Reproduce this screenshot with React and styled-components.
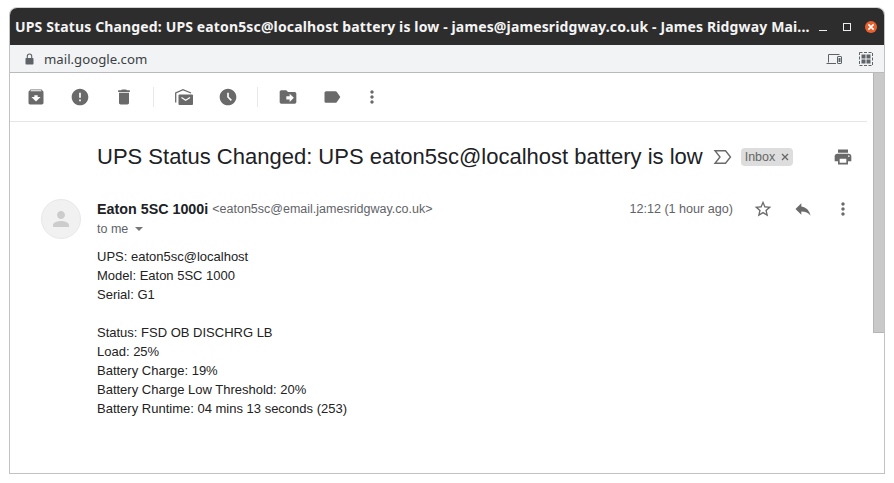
import styled, { createGlobalStyle } from "styled-components";

const GlobalStyle = createGlobalStyle`
  html, body { margin: 0; padding: 0; background: #fff; }
`;

const Page = styled.div`
  width: 894px;
  height: 483px;
  padding: 7px 0 0 9px;
  box-sizing: border-box;
  background: #fff;
  overflow: hidden;
`;

const Frame = styled.div`
  width: 876px;
  height: 467px;
  display: flex;
  flex-direction: column;
  border: 1px solid #c2c2c2;
  border-top-color: #d2d2d2;
  border-radius: 8px 8px 0 0;
  box-sizing: border-box;
  overflow: hidden;
`;

const TitleBar = styled.div`
  height: 37px;
  flex: none;
  display: flex;
  align-items: center;
  padding: 0 7px 0 5px;
  background: #2e2d2d;
  box-sizing: border-box;
`;

const WindowTitle = styled.div`
  flex: 1;
  font: 700 14px "Noto Sans", sans-serif;
  letter-spacing: 0.14px;
  color: #f4f4f4;
  white-space: nowrap;
  overflow: hidden;
`;

const WinButtons = styled.div`
  display: flex;
  align-items: center;
  gap: 14px;
`;

const AddressBar = styled.div`
  height: 28px;
  flex: none;
  display: flex;
  align-items: center;
  padding: 0 11px 0 15px;
  background: #f1f3f4;
  border-bottom: 1px solid #b9babb;
  box-sizing: border-box;
`;

const Url = styled.div`
  flex: 1;
  margin-left: 10px;
  font: 400 13.2px "Noto Sans", sans-serif;
  color: #3c4043;
`;

const AddressIcons = styled.div`
  display: flex;
  align-items: center;
  gap: 17px;
`;

const Viewport = styled.div`
  flex: 1;
  min-height: 0;
  display: flex;
  background: #fff;
`;

const Mail = styled.div`
  flex: 1;
  min-width: 0;
  font-family: "Liberation Sans", Arial, sans-serif;
`;

const ScrollTrack = styled.div`
  width: 11px;
  flex: none;
`;

const ScrollThumb = styled.div`
  height: 260px;
  background: #c9c9c9;
  border-left: 1px solid #b5b5b5;
  border-bottom: 1px solid #b5b5b5;
  box-sizing: border-box;
`;

const Toolbar = styled.div`
  height: 49px;
  margin-right: 6px;
  display: flex;
  align-items: center;
  padding-left: 4px;
  border-bottom: 1px solid #e6e6e6;
  box-sizing: border-box;
`;

const ToolSlot = styled.div`
  width: ${(p) => p.$w || 44}px;
  display: flex;
  justify-content: center;
  align-items: center;
`;

const Divider = styled.div`
  width: 1px;
  height: 20px;
  margin: 0 8px 0 7px;
  background: #e8e8e8;
`;

const SubjectRow = styled.div`
  display: flex;
  align-items: center;
  height: 32px;
  margin-top: 19px;
  padding-left: 87px;
`;

const Subject = styled.h2`
  margin: 0;
  font-size: 22px;
  font-weight: 400;
  color: #202124;
`;

const ImportanceMark = styled.svg`
  margin-left: 10px;
`;

const Label = styled.span`
  display: inline-flex;
  align-items: center;
  height: 18px;
  margin-left: 8px;
  padding: 0 4px;
  gap: 6px;
  background: #dddddd;
  border-radius: 4px;
  font-size: 12.5px;
  color: #666;
`;

const PrintSlot = styled.div`
  margin-left: 40px;
  display: flex;
`;

const MessageRow = styled.div`
  display: flex;
  margin-top: 26px;
  padding-left: 31px;
`;

const Avatar = styled.div`
  width: 40px;
  height: 40px;
  flex: none;
  display: flex;
  align-items: center;
  justify-content: center;
  border-radius: 50%;
  background: #f1f1f1;
  border: 1px solid #e8e8e8;
  box-sizing: border-box;
`;

const MessageMain = styled.div`
  flex: 1;
  margin-left: 16px;
  min-width: 0;
`;

const SenderLine = styled.div`
  display: flex;
  align-items: center;
  height: 20px;
`;

const SenderName = styled.span`
  font-size: 14.3px;
  font-weight: 700;
  color: #202124;
`;

const SenderMail = styled.span`
  margin-left: 4px;
  font-size: 12.5px;
  color: #5f6368;
`;

const Time = styled.span`
  margin-left: auto;
  font-size: 12.6px;
  color: #5f6368;
`;

const MsgActions = styled.div`
  display: flex;
  align-items: center;
  margin-left: 10px;
  margin-right: 10px;
`;

const ToMe = styled.div`
  display: flex;
  align-items: center;
  height: 20px;
  font-size: 12.5px;
  color: #5f6368;
`;

const Caret = styled.span`
  width: 0;
  height: 0;
  margin-left: 7px;
  border-left: 4px solid transparent;
  border-right: 4px solid transparent;
  border-top: 4px solid #777;
`;

const Body = styled.div`
  margin-top: 8px;
  font-size: 13px;
  line-height: 19px;
  color: #222;
  white-space: pre-line;
`;

const Icon = ({ d, size = 20, color = "#6a6a6a" }) => (
  <svg width={size} height={size} viewBox="0 0 24 24" fill={color}>
    <path d={d} />
  </svg>
);

const paths = {
  archive:
    "M20.54 5.23l-1.39-1.68C18.88 3.21 18.47 3 18 3H6c-.47 0-.88.21-1.16.55L3.46 5.23C3.17 5.57 3 6.02 3 6.5V19c0 1.1.9 2 2 2h14c1.1 0 2-.9 2-2V6.5c0-.48-.17-.93-.46-1.27zM12 17.5L6.5 12H10v-2h4v2h3.5L12 17.5zM5.12 5l.81-1h12l.94 1H5.12z",
  report:
    "M12 2C6.48 2 2 6.48 2 12s4.48 10 10 10 10-4.48 10-10S17.52 2 12 2zm1 15h-2v-2h2v2zm0-4h-2V7h2v6z",
  trash: "M6 19c0 1.1.9 2 2 2h8c1.1 0 2-.9 2-2V7H6v12zM19 4h-3.5l-1-1h-5l-1 1H5v2h14V4z",
  clock:
    "M11.99 2C6.47 2 2 6.48 2 12s4.47 10 9.99 10C17.52 22 22 17.52 22 12S17.52 2 11.99 2zm3.3 14.71L11 12.41V7h2v4.59l3.71 3.71-1.42 1.41z",
  move: "M20 6h-8l-2-2H4c-1.1 0-1.99.9-1.99 2L2 18c0 1.1.9 2 2 2h16c1.1 0 2-.9 2-2V8c0-1.1-.9-2-2-2zm-6 12v-3h-4v-4h4V8l5 5-5 5z",
  label:
    "M17.63 5.84C17.27 5.33 16.67 5 16 5L5 5.01C3.9 5.01 3 5.9 3 7v10c0 1.1.9 1.99 2 1.99L16 19c.67 0 1.27-.33 1.63-.84L22 12l-4.37-6.16z",
  more: "M12 8c1.1 0 2-.9 2-2s-.9-2-2-2-2 .9-2 2 .9 2 2 2zm0 2c-1.1 0-2 .9-2 2s.9 2 2 2 2-.9 2-2-.9-2-2-2zm0 6c-1.1 0-2 .9-2 2s.9 2 2 2 2-.9 2-2-.9-2-2-2z",
  print:
    "M19 8H5c-1.66 0-3 1.34-3 3v6h4v4h12v-4h4v-6c0-1.66-1.34-3-3-3zm-3 11H8v-5h8v5zm3-7c-.55 0-1-.45-1-1s.45-1 1-1 1 .45 1 1-.45 1-1 1zm-1-9H6v4h12V3z",
  star: "M22 9.24l-7.19-.62L12 2 9.19 8.63 2 9.24l5.46 4.73L5.82 21 12 17.27 18.18 21l-1.63-7.03L22 9.24zM12 15.4l-3.76 2.27 1-4.28-3.32-2.88 4.38-.38L12 6.1l1.71 4.04 4.38.38-3.32 2.88 1 4.28L12 15.4z",
  reply: "M10 9V5l-7 7 7 7v-4.1c5 0 8.5 1.6 11 5.1-1-5-4-10-11-11z",
  person:
    "M12 12c2.21 0 4-1.79 4-4s-1.79-4-4-4-4 1.79-4 4 1.79 4 4 4zm0 2c-2.67 0-8 1.34-8 4v2h16v-2c0-2.66-5.33-4-8-4z",
};

// envelope under an open roof, the "mark as unread" button
const MarkUnreadIcon = () => (
  <svg width="20" height="20" viewBox="0 0 20 20" fill="none">
    <path d="M1.7 15.5V6L9 2.6 17 6" stroke="#6a6a6a" strokeWidth="1.3" />
    <path d="M5.5 7.5H18a1 1 0 0 1 1 1V17a1 1 0 0 1-1 1H5.5a1 1 0 0 1-1-1V8.5a1 1 0 0 1 1-1z" fill="#6a6a6a" />
    <path d="M7.5 10.5l4.2 2.8 4.3-2.8" stroke="#fff" strokeWidth="1.2" />
  </svg>
);

const LockIcon = () => (
  <svg width="9" height="12" viewBox="0 0 9 12">
    <path d="M2.3 5V3.2a2.2 2.2 0 0 1 4.4 0V5" fill="none" stroke="#5f6368" strokeWidth="1.1" />
    <rect x=".5" y="5" width="8" height="6.5" rx=".8" fill="#5f6368" />
  </svg>
);

const DevicesIcon = () => (
  <svg width="16" height="12" viewBox="0 0 16 12" fill="none">
    <path d="M2.5 9.5V1.5h11M.5 10.5h9.5" stroke="#5f6368" strokeWidth="1" />
    <rect x="11.5" y="3.5" width="4" height="7" rx=".5" stroke="#5f6368" />
    <rect x="12.5" y="5" width="2" height="4" fill="#5f6368" />
  </svg>
);

const GridIcon = () => (
  <svg width="14" height="14" viewBox="0 0 14 14" fill="none">
    <rect x=".5" y=".5" width="13" height="13" stroke="#5f6368" strokeDasharray="3 1.5" />
    <rect x="2.5" y="2.5" width="4" height="4" fill="#5f6368" />
    <rect x="7.5" y="2.5" width="4" height="4" fill="#5f6368" />
    <rect x="2.5" y="7.5" width="4" height="4" fill="#5f6368" />
    <rect x="7.5" y="7.5" width="4" height="4" fill="#5f6368" />
  </svg>
);

const MinimizeIcon = () => (
  <svg width="10" height="10" viewBox="0 0 10 10">
    <rect y="8" width="8" height="1" fill="#eee" />
  </svg>
);

const MaximizeIcon = () => (
  <svg width="8" height="8" viewBox="0 0 8 8" fill="none">
    <rect x=".5" y=".5" width="7" height="7" stroke="#eee" />
  </svg>
);

const CloseIcon = () => (
  <svg width="12" height="12" viewBox="0 0 12 12">
    <circle cx="6" cy="6" r="6" fill="#e9602f" />
    <path d="M3.4 3.4l5.2 5.2M8.6 3.4l-5.2 5.2" stroke="#fff" strokeWidth="1.6" />
  </svg>
);

const bodyText = `UPS: eaton5sc@localhost
Model: Eaton 5SC 1000
Serial: G1

Status: FSD OB DISCHRG LB
Load: 25%
Battery Charge: 19%
Battery Charge Low Threshold: 20%
Battery Runtime: 04 mins 13 seconds (253)`;

export default function App() {
  return (
    <Page>
      <GlobalStyle />
      <Frame>
        <TitleBar>
          <WindowTitle>
            UPS Status Changed: UPS eaton5sc@localhost battery is low - james@jamesridgway.co.uk - James Ridgway Mai...
          </WindowTitle>
          <WinButtons>
            <MinimizeIcon />
            <MaximizeIcon />
            <CloseIcon />
          </WinButtons>
        </TitleBar>
        <AddressBar>
          <LockIcon />
          <Url>mail.google.com</Url>
          <AddressIcons>
            <DevicesIcon />
            <GridIcon />
          </AddressIcons>
        </AddressBar>
        <Viewport>
          <Mail>
            <Toolbar>
              <ToolSlot><Icon d={paths.archive} /></ToolSlot>
              <ToolSlot><Icon d={paths.report} /></ToolSlot>
              <ToolSlot><Icon d={paths.trash} /></ToolSlot>
              <Divider />
              <ToolSlot><MarkUnreadIcon /></ToolSlot>
              <ToolSlot><Icon d={paths.clock} /></ToolSlot>
              <Divider />
              <ToolSlot><Icon d={paths.move} /></ToolSlot>
              <ToolSlot><Icon d={paths.label} /></ToolSlot>
              <ToolSlot $w={36}><Icon d={paths.more} /></ToolSlot>
            </Toolbar>
            <SubjectRow>
              <Subject>UPS Status Changed: UPS eaton5sc@localhost battery is low</Subject>
              <ImportanceMark width="20" height="20" viewBox="0 0 20 20" fill="none">
                <path d="M2 3.7h10.5l5 6.3-5 6.3H2l5-6.3z" stroke="#6a6a6a" strokeWidth="1.4" />
              </ImportanceMark>
              <Label>
                Inbox
                <svg width="8" height="8" viewBox="0 0 8 8">
                  <path d="M1 1l6 6M7 1l-6 6" stroke="#666" strokeWidth="1.3" />
                </svg>
              </Label>
              <PrintSlot><Icon d={paths.print} /></PrintSlot>
            </SubjectRow>
            <MessageRow>
              <Avatar><Icon d={paths.person} size={24} color="#cccccc" /></Avatar>
              <MessageMain>
                <SenderLine>
                  <SenderName>Eaton 5SC 1000i</SenderName>
                  <SenderMail>&lt;eaton5sc@email.jamesridgway.co.uk&gt;</SenderMail>
                  <Time>12:12 (1 hour ago)</Time>
                  <MsgActions>
                    <ToolSlot $w={40}><Icon d={paths.star} /></ToolSlot>
                    <ToolSlot $w={40}><Icon d={paths.reply} /></ToolSlot>
                    <ToolSlot $w={40}><Icon d={paths.more} /></ToolSlot>
                  </MsgActions>
                </SenderLine>
                <ToMe>to me<Caret /></ToMe>
                <Body>{bodyText}</Body>
              </MessageMain>
            </MessageRow>
          </Mail>
          <ScrollTrack><ScrollThumb /></ScrollTrack>
        </Viewport>
      </Frame>
    </Page>
  );
}
